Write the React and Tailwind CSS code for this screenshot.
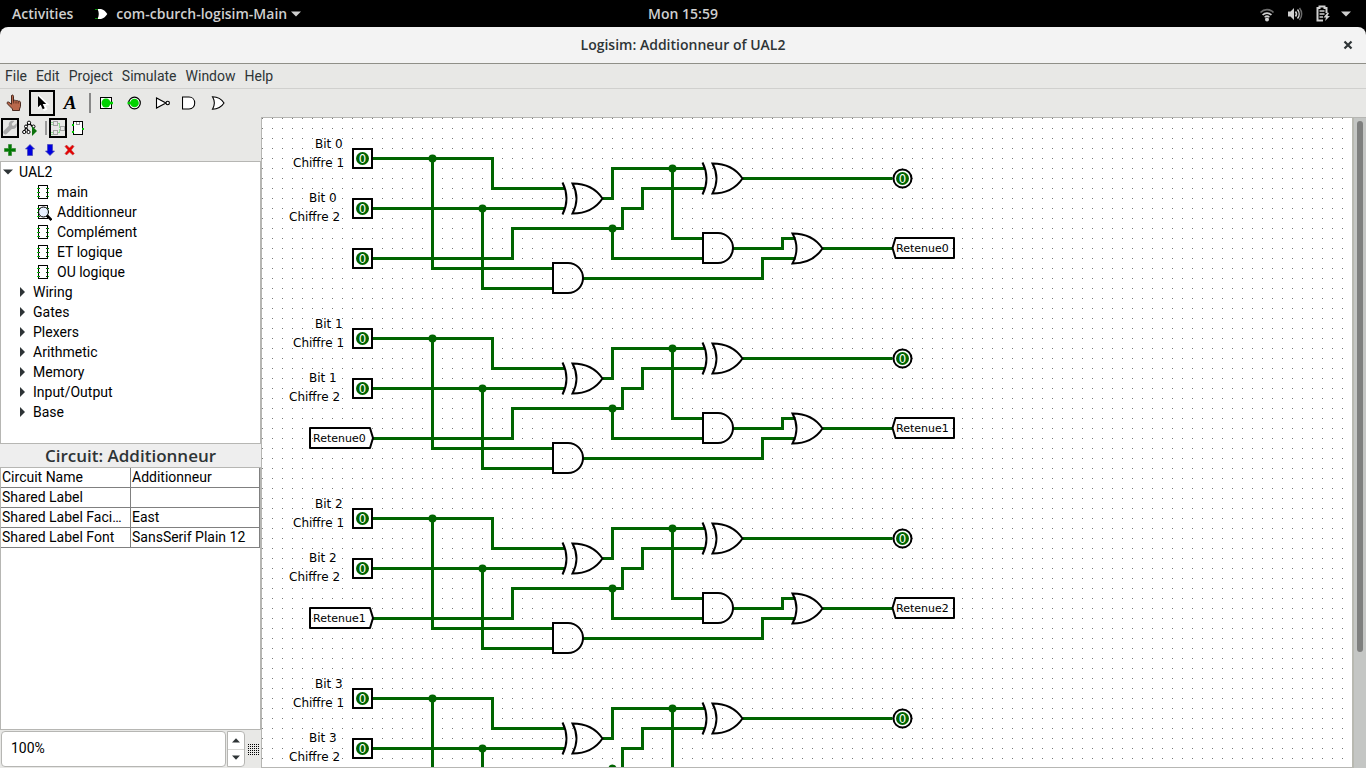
const ROW_COUNT = 4;
const ROW_HEIGHT = 180;

const MENUS = ['File', 'Edit', 'Project', 'Simulate', 'Window', 'Help'];
const CIRCUITS = ['main', 'Additionneur', 'Complément', 'ET logique', 'OU logique'];
const LIBRARIES = ['Wiring', 'Gates', 'Plexers', 'Arithmetic', 'Memory', 'Input/Output', 'Base'];
const ATTRIBUTES = [
  ['Circuit Name', 'Additionneur'],
  ['Shared Label', ''],
  ['Shared Label Facing', 'East'],
  ['Shared Label Font', 'SansSerif Plain 12'],
];

/* ---------- icons ---------- */

function WifiIcon() {
  return (
    <svg width="16" height="16" viewBox="0 0 16 16" fill="none" strokeLinecap="butt">
      <path d="M1.5 6.5a9 9 0 0 1 13 0" stroke="#6b6b6b" strokeWidth="1.7" />
      <path d="M3.6 9a6.2 6.2 0 0 1 8.8 0" stroke="#d0d0d0" strokeWidth="1.7" />
      <path d="M5.6 11.2a3.6 3.6 0 0 1 4.8 0" stroke="#d0d0d0" strokeWidth="1.5" />
      <circle cx="8" cy="13.6" r="2" fill="#d0d0d0" />
    </svg>
  );
}

function VolumeIcon() {
  return (
    <svg width="16" height="16" viewBox="0 0 16 16" fill="none">
      <path d="M1 5.5h2.5L7 2v12L3.500 10.500H1z" fill="#d0d0d0" />
      <path d="M8.500 5.500a4 4 0 0 1 0 5" stroke="#d0d0d0" strokeWidth="1.6" />
      <path d="M10.500 3.500a7 7 0 0 1 0 9" stroke="#d0d0d0" strokeWidth="1.500" />
      <path d="M12.500 2a9.500 9.500 0 0 1 0 12" stroke="#6b6b6b" strokeWidth="1.500" />
    </svg>
  );
}

function BatteryIcon() {
  return (
    <svg width="16" height="17" viewBox="0 0 16 17" fill="none">
      <path d="M11.500 8V3h-2V1.500h-5V3h-2v12.500H8" stroke="#d0d0d0" strokeWidth="2" />
      <path d="M4.500 6h5M4.500 9h5M4.500 12h3.500" stroke="#d0d0d0" strokeWidth="1.600" />
      <path d="M12.500 7.500 8.500 12.500h2.500l-1 3.500 5-5h-2.500l1.500-3z" fill="#d0d0d0" />
    </svg>
  );
}

function TriangleDown({ className }) {
  return (
    <svg className={className} width="10" height="6" viewBox="0 0 10 6" fill="currentColor">
      <path d="M0 .5h10L5 5.500z" />
    </svg>
  );
}

function AppIcon() {
  return (
    <svg width="13" height="12" viewBox="0 0 13 12">
      <path d="M2.500 1H6c3 .5 4.500 2.500 6.300 5C10.500 8.500 9 10.500 6 11H2.500C4.200 8 4.200 4 2.500 1z" fill="#fff" />
      <path d="M0 1.500h3M0 10.500h3" stroke="#0a8a0a" />
    </svg>
  );
}

function PokeIcon() {
  return (
    <svg width="16" height="18" viewBox="0 0 16 18">
      <path
        d="M5.500 1.500c.7-.9 2-.5 2 .8V7l.8-.7c.6-.3 1.400 0 1.600.6l.7-.3c.7-.2 1.300.1 1.500.7.9-.5 2.200-.1 2.400 1v4.200l-1 2.500v1.500H6.500V15L2.500 11 1 9.200c-.2-1 1-1.600 1.900-1l2.600 2z"
        fill="#b9684c"
        stroke="#3a1c12"
        strokeWidth=".9"
      />
      <path d="M7.700 7v2.500M10 7.500v2M12.200 7.800v1.800" stroke="#3a1c12" strokeWidth=".7" />
    </svg>
  );
}

function ArrowIcon() {
  return (
    <svg width="16" height="18" viewBox="0 0 16 18">
      <path d="M5 2v12l3-2.500 2.200 4.500 2.300-1-2.200-4.500h3.700z" fill="#fff" stroke="#fff" strokeWidth="1.500" />
      <path d="M4 2v11.200l2.700-2.500 2 4.500 2-.9-2-4.300h3.500z" fill="#000" />
    </svg>
  );
}

function TextToolIcon() {
  return (
    <span className="font-['Liberation_Serif',serif] text-[19px] leading-[20px] font-bold italic text-black">A</span>
  );
}

function PinSquareIcon() {
  return (
    <svg width="16" height="16" viewBox="0 0 16 16">
      <rect x="2.500" y="2.500" width="11" height="11" fill="#fff" stroke="#000" shapeRendering="crispEdges" />
      <circle cx="8" cy="8" r="4.500" fill="#00d200" />
      <path d="M11 8h4" stroke="#00d200" strokeWidth="2.500" />
    </svg>
  );
}

function PinRoundIcon() {
  return (
    <svg width="16" height="16" viewBox="0 0 16 16">
      <circle cx="8.500" cy="8" r="5.800" fill="#fff" stroke="#000" strokeWidth="1.200" />
      <circle cx="8.500" cy="8" r="4.300" fill="#00d200" />
      <path d="M1.500 8H5" stroke="#00d200" strokeWidth="2.500" />
    </svg>
  );
}

function NotIcon() {
  return (
    <svg width="16" height="16" viewBox="0 0 16 16" fill="#fff" stroke="#000" strokeWidth="1.100">
      <path d="M2.500 3v10L12 8z" />
      <circle cx="13.700" cy="8" r="1.700" />
    </svg>
  );
}

function AndIcon() {
  return (
    <svg width="16" height="16" viewBox="0 0 16 16" fill="#fff" stroke="#000" strokeWidth="1.100">
      <path d="M.5 2h6.500c3.500 0 5.700 2.700 5.700 6S10.500 14 7 14H.5z" />
    </svg>
  );
}

function OrIcon() {
  return (
    <svg width="16" height="16" viewBox="0 0 16 16" fill="#fff" stroke="#000" strokeWidth="1.100">
      <path d="M2.500 1.800C8 2 11.500 4 14 8 11.500 12 8 14 2.500 14.200 5 10 5 6 2.500 1.800z" />
    </svg>
  );
}

function WrenchIcon() {
  return (
    <svg width="16" height="18" viewBox="0 0 16 18">
      <path
        d="M15.500 3.500 12.500 6.500 10.500 6 10 4l3-3c-2-.8-4.300-.3-5.500 1.200-1 1.300-1.200 2.800-.8 4.300L1 12.200c-1 1-1 2.600 0 3.500s2.500.9 3.500 0l5.600-5.700c1.600.4 3.200 0 4.300-1.100 1.400-1.400 1.800-3.500 1.100-5.400z"
        fill="#a9a9a9"
      />
    </svg>
  );
}

function SimulationTreeIcon() {
  return (
    <svg width="16" height="16" viewBox="0 0 16 16">
      <g fill="#fff" stroke="#000">
        <path d="M7 3 4 7 2.500 11M7 3l5 5M4 7l2.500 4" fill="none" strokeWidth="1.300" />
        <circle cx="7" cy="2.800" r="1.700" />
        <circle cx="4" cy="6.500" r="1.500" />
        <circle cx="11.500" cy="6.500" r="1.500" />
        <circle cx="2.200" cy="12" r="1.600" />
        <circle cx="6.500" cy="12" r="1.600" />
      </g>
      <path d="M10 6v10l5-5z" fill="#0b720b" />
    </svg>
  );
}

function LayoutIcon() {
  return (
    <svg width="16" height="16" viewBox="0 0 16 16" className="shrink-0" fill="none" shapeRendering="crispEdges">
      <path d="M7 3.500h2.500v4h1M7 12.500h2.500v-3h1M1 2.500h2M1 12.500h2M1 4.500h2M1 14.500h2" stroke="#8fdc8f" />
      <path d="M3.500 1.500h4v4h-4zM3.500 10.500h4v4h-4zM10.500 6.500h4v4h-4z" stroke="#a5a5a5" />
    </svg>
  );
}

function AppearanceIcon() {
  return (
    <svg width="16" height="16" viewBox="0 0 16 16" shapeRendering="crispEdges">
      <rect x="3.500" y="1.500" width="9" height="13" fill="#fff" stroke="#000" />
      <path d="M6.500 2v2h3V2" fill="none" stroke="#999" />
      <path d="M2 5h2M2 12h2M12 9h2" stroke="#00c400" strokeWidth="2" />
    </svg>
  );
}

function PlusIcon() {
  return (
    <svg width="12" height="12" viewBox="0 0 12 12">
      <path d="M4.500.5h3v4h4v3h-4v4h-3v-4h-4v-3h4z" fill="#007a00" stroke="#3b8a3b" strokeWidth=".8" />
    </svg>
  );
}

function UpIcon() {
  return (
    <svg width="12" height="12" viewBox="0 0 12 12">
      <path d="M6 .5 10.500 5H8.500v6.500h-5V5h-2z" fill="#0000e0" stroke="#4444b0" strokeWidth=".7" />
    </svg>
  );
}

function DownIcon() {
  return (
    <svg width="12" height="12" viewBox="0 0 12 12">
      <path d="M6 11.500 10.500 7H8.500V.5h-5V7h-2z" fill="#0000e0" stroke="#4444b0" strokeWidth=".7" />
    </svg>
  );
}

function DeleteIcon() {
  return (
    <svg width="12" height="12" viewBox="0 0 12 12">
      <path
        d="M1 2.500 2.500 1 5.500 4 8.500 1 10 2.500 7.300 6l3 3.500L8.800 11 5.500 8 2.500 11 1 9.500 4 6z"
        fill="#e60000"
        stroke="#c04040"
        strokeWidth=".6"
      />
    </svg>
  );
}

function ChipIcon({ open }) {
  return (
    <svg width="16" height="18" viewBox="0 0 16 18" className="shrink-0">
      <g shapeRendering="crispEdges">
        <rect x="2.500" y="2.500" width="9" height="13" fill="#fff" stroke="#000" />
        <path d="M1 5.500h3M1 9.500h3M1 13.500h3M10 5.500h3M10 9.500h3M10 13.500h3" stroke="#063c06" />
        <path d="M1 5.500h2M1 9.500h2M1 13.500h2M11 5.500h1M12 9.500h1M12 13.500h1" stroke="#00d200" />
      </g>
      {open && (
        <g>
          <path d="m11 12.500 4.500 4.500" stroke="#000" strokeWidth="2.600" />
          <circle cx="7.500" cy="9" r="5" fill="#e6eeff" fillOpacity=".9" stroke="#000" />
        </g>
      )}
    </svg>
  );
}

/* ---------- circuit parts ---------- */

function AndGate({ x, y }) {
  return (
    <path
      d={`M${x - 30} ${y - 15.5}h15a15 15 0 0 1 0 30h-15z`}
      fill="none"
      stroke="#000"
      strokeWidth="2"
    />
  );
}

function OrGate({ x, y, exclusive }) {
  return (
    <g fill="none" stroke="#000" strokeWidth="2">
      <path
        d={`M${x} ${y}Q${x - 10} ${y - 15} ${x - 30} ${y - 15}Q${x - 22} ${y} ${x - 30} ${y + 15}Q${x - 10} ${y + 15} ${x} ${y}z`}
      />
      {exclusive && <path d={`M${x - 40} ${y - 16}Q${x - 32} ${y} ${x - 40} ${y + 16}`} />}
    </g>
  );
}

function PinValue({ x, y }) {
  return (
    <g>
      <circle cx={x} cy={y} r="6.5" fill="#006400" />
      <text
        x={x}
        y={y + 4.5}
        textAnchor="middle"
        className="font-['DejaVu_Sans_Condensed','DejaVu_Sans',sans-serif] text-[13px]"
        fill="#fff"
      >
        0
      </text>
    </g>
  );
}

function InputPin({ x, y }) {
  return (
    <g>
      <rect x={x - 9.5} y={y - 9.5} width="19" height="19" fill="none" stroke="#000" strokeWidth="2" />
      <PinValue x={x} y={y} />
    </g>
  );
}

function OutputPin({ x, y }) {
  return (
    <g>
      <circle cx={x} cy={y} r="9" fill="#fff" stroke="#000" strokeWidth="2" />
      <PinValue x={x} y={y} />
    </g>
  );
}

function Tunnel({ x, y, label, side }) {
  const top = y - 10.5;
  const d =
    side === 'left'
      ? `M${x + 0.5} ${y - 0.5}L${x - 2.5} ${top}h-60v20h60z`
      : `M${x} ${y - 0.5}L${x + 3} ${top}h58.500v20h-58.500z`;
  return (
    <g>
      <path d={d} fill="none" stroke="#000" strokeWidth="2" strokeLinejoin="round" />
      <text x={side === 'left' ? x - 59.5 : x + 3.5} y={y + 3.5} fontSize="11" fill="#000">
        {label}
      </text>
    </g>
  );
}

const WIRES = [
  'M110 40H230V70H302',
  'M170 40V150H290',
  'M110 90H302',
  'M220 90V170H290',
  'M110 140H250V110H360V90H380V70H442',
  'M350 110V140H440',
  'M340 80H350V50H442',
  'M410 50V120H440',
  'M470 130H520V120H533',
  'M320 160H500V140H533',
  'M560 130H630',
  'M480 60H630',
].join('');

const JUNCTIONS = [
  [170, 40],
  [220, 90],
  [350, 110],
  [410, 50],
];

function FullAdder({ index }) {
  const hasCarry = index < ROW_COUNT - 1;
  return (
    <g transform={`translate(0 ${index * ROW_HEIGHT})`}>
      <g fontSize="12" fill="#000">
        <text x="52.5" y="29.500">{`Bit ${index}`}</text>
        <text x="30.5" y="48.500">Chiffre 1</text>
        <text x="46.5" y="83.500">{`Bit ${index}`}</text>
        <text x="26.5" y="102.500">Chiffre 2</text>
      </g>
      <path d={WIRES} fill="none" stroke="#006400" strokeWidth="3" />
      {JUNCTIONS.map(([x, y]) => (
        <circle key={`${x}-${y}`} cx={x} cy={y} r="4" fill="#006400" />
      ))}
      <InputPin x={100} y={40} />
      <InputPin x={100} y={90} />
      {index === 0 && <InputPin x={100} y={140} />}
      {index > 0 && hasCarry && <Tunnel x={110} y={140} side="left" label={`Retenue${index - 1}`} />}
      <OrGate x={340} y={80} exclusive />
      <OrGate x={480} y={60} exclusive />
      <AndGate x={470.5} y={130} />
      <AndGate x={320.5} y={160} />
      <OrGate x={560} y={130} />
      <OutputPin x={640} y={60} />
      {hasCarry && <Tunnel x={630} y={130} side="right" label={`Retenue${index}`} />}
    </g>
  );
}

function CircuitCanvas() {
  return (
    <svg className="block h-full w-full" role="img" aria-label="Additionneur">
      <defs>
        <pattern id="grid" width="10" height="10" patternUnits="userSpaceOnUse">
          <rect width="1" height="1" fill="#777" />
        </pattern>
      </defs>
      <rect width="100%" height="100%" fill="url(#grid)" />
      <g transform="translate(.5 .5)" className="font-['DejaVu_Sans',sans-serif]">
        {Array.from({ length: ROW_COUNT }, (_, i) => (
          <FullAdder key={i} index={i} />
        ))}
      </g>
    </svg>
  );
}

/* ---------- window parts ---------- */

function ToolButton({ label, selected, children }) {
  return (
    <button
      type="button"
      aria-label={label}
      aria-pressed={!!selected}
      className={
        selected
          ? 'mx-px flex h-[26px] w-[26px] items-center justify-center border-2 border-black'
          : 'flex h-[26px] w-7 items-center justify-center'
      }
    >
      {children}
    </button>
  );
}

function SmallButton({ label, selected, children }) {
  return (
    <button
      type="button"
      aria-label={label}
      className={
        selected
          ? 'mx-px flex h-5 w-[18px] items-center justify-center border-2 border-black'
          : 'flex h-5 w-5 items-center justify-center'
      }
    >
      {children}
    </button>
  );
}

function TopBar() {
  return (
    <header className="grid h-[27px] shrink-0 grid-cols-[1fr_auto_1fr] items-center bg-black px-3 font-['Open_Sans',sans-serif] text-sm leading-[26px] font-semibold text-[#cfcfcf]">
      <div className="flex items-center">
        <button type="button">Activities</button>
        <button type="button" className="ml-[22px] flex items-center">
          <AppIcon />
          <span className="ml-2">com-cburch-logisim-Main</span>
          <TriangleDown className="ml-1" />
        </button>
      </div>
      <time>Mon 15:59</time>
      <div className="flex items-center justify-end">
        <WifiIcon />
        <span className="ml-3"><VolumeIcon /></span>
        <span className="ml-3"><BatteryIcon /></span>
        <TriangleDown className="mr-[3px] ml-[10px]" />
      </div>
    </header>
  );
}

function TitleBar() {
  return (
    <div className="bg-black">
      <div className="grid h-[37px] grid-cols-[1fr_auto_1fr] items-center rounded-t-lg border-b border-[#8f8f88] bg-[#f3f3f3] px-3 text-[#2e3436]">
        <span />
        <h1 className="font-['Open_Sans',sans-serif] text-sm font-semibold">Logisim: Additionneur of UAL2</h1>
        <button type="button" aria-label="Close" className="justify-self-end p-px">
          <svg width="10" height="10" viewBox="0 0 10 10">
            <path d="m1.500 1.500 7 7m0-7-7 7" stroke="currentColor" strokeWidth="2.200" />
          </svg>
        </button>
      </div>
    </div>
  );
}

function Explorer() {
  return (
    <nav
      aria-label="Project"
      className="min-h-0 flex-[282] overflow-hidden border border-[#b6b6b3] bg-white text-sm leading-5 text-black"
    >
      <div className="flex items-center pl-[2px]">
        <TriangleDown className="text-[#2e3436]" />
        <span className="ml-1.5">UAL2</span>
      </div>
      <ul>
        {CIRCUITS.map((name) => (
          <li key={name} className="flex h-5 items-center pl-[35px]">
            <ChipIcon open={name === 'Additionneur'} />
            <span className="ml-[5px]">{name}</span>
          </li>
        ))}
        {LIBRARIES.map((name) => (
          <li key={name} className="flex h-5 items-center pl-[19px]">
            <svg width="5" height="10" viewBox="0 0 5 10" fill="#2e3436">
              <path d="M0 0v10l5-5z" />
            </svg>
            <span className="ml-2">{name}</span>
          </li>
        ))}
      </ul>
    </nav>
  );
}

function Attributes() {
  return (
    <section className="flex min-h-0 flex-[287] flex-col">
      <h2 className="flex h-6 items-center justify-center border-b border-[#b6b6b3] bg-[#eeeeee] font-['Open_Sans',sans-serif] text-[17px] leading-6 font-semibold text-[#2e3436]">
        Circuit: Additionneur
      </h2>
      <div className="flex-1 border-x border-b border-[#b6b6b3] bg-white">
        <table className="w-full table-fixed border-separate border-spacing-0 border-r border-[#808080] text-sm leading-[19px] text-black">
          <colgroup>
            <col className="w-[130px]" />
            <col />
          </colgroup>
          <tbody>
            {ATTRIBUTES.map(([name, value]) => (
              <tr key={name} className="h-5">
                <th scope="row" className="truncate border-r border-b border-[#808080] pr-1 pl-px text-left font-normal">
                  {name}
                </th>
                <td className="truncate border-b border-[#808080] px-px">{value}</td>
              </tr>
            ))}
          </tbody>
        </table>
      </div>
    </section>
  );
}

function ZoomControl() {
  return (
    <div className="flex h-[38px] shrink-0 items-center gap-px pl-px">
      <input
        type="text"
        aria-label="Zoom"
        defaultValue="100%"
        className="h-9 min-w-0 flex-1 rounded border border-[#b6b6b3] bg-white px-[9px] pb-0.5 text-sm text-black"
      />
      <div className="flex h-9 w-[18px] flex-col divide-y divide-[#d5d5d2] rounded-r border border-[#b6b6b3] bg-white text-[#2e3436]">
        <button type="button" aria-label="Zoom in" className="flex flex-1 items-center justify-center">
          <svg width="8" height="5" viewBox="0 0 8 5" fill="currentColor">
            <path d="M0 4.500h8L4 .2z" />
          </svg>
        </button>
        <button type="button" aria-label="Zoom out" className="flex flex-1 items-center justify-center">
          <svg width="8" height="5" viewBox="0 0 8 5" fill="currentColor">
            <path d="M0 .5h8L4 4.800z" />
          </svg>
        </button>
      </div>
      <button type="button" aria-label="Toggle grid" className="flex w-[15px] items-center justify-center">
        <svg width="11" height="11" viewBox="0 0 11 11" shapeRendering="crispEdges">
          <defs>
            <pattern id="grip" width="2" height="2" patternUnits="userSpaceOnUse">
              <rect width="1" height="1" fill="#000" />
            </pattern>
          </defs>
          <rect width="11" height="11" fill="url(#grip)" />
        </svg>
      </button>
    </div>
  );
}

export default function App() {
  return (
    <div className="flex h-screen flex-col overflow-hidden bg-[#e8e8e6] font-['Roboto',sans-serif]">
      <TopBar />
      <TitleBar />
      <div className="flex h-[25px] shrink-0 items-center gap-[9px] border-b border-[#d0d0ce] px-[5px] text-sm text-[#2e3436]">
        {MENUS.map((name) => (
          <button key={name} type="button">
            {name}
          </button>
        ))}
      </div>
      <div className="flex h-7 shrink-0 items-center">
        <ToolButton label="Poke tool"><PokeIcon /></ToolButton>
        <ToolButton label="Edit tool" selected><ArrowIcon /></ToolButton>
        <ToolButton label="Text tool"><TextToolIcon /></ToolButton>
        <span className="mr-px ml-[5px] h-5 w-[2px] bg-[#888]" />
        <ToolButton label="Input pin"><PinSquareIcon /></ToolButton>
        <ToolButton label="Output pin"><PinRoundIcon /></ToolButton>
        <ToolButton label="NOT gate"><NotIcon /></ToolButton>
        <ToolButton label="AND gate"><AndIcon /></ToolButton>
        <ToolButton label="OR gate"><OrIcon /></ToolButton>
      </div>
      <div className="flex min-h-0 flex-1">
        <aside className="flex w-[261px] shrink-0 flex-col">
          <div className="flex h-[22px] shrink-0 items-center">
            <SmallButton label="Show project" selected><WrenchIcon /></SmallButton>
            <SmallButton label="Show simulation"><SimulationTreeIcon /></SmallButton>
            <span className="mr-px ml-[5px] h-[14px] w-[2px] bg-[#999]" />
            <SmallButton label="Edit layout" selected><LayoutIcon /></SmallButton>
            <SmallButton label="Edit appearance"><AppearanceIcon /></SmallButton>
          </div>
          <div className="flex h-[22px] shrink-0 items-center">
            <SmallButton label="Add circuit"><PlusIcon /></SmallButton>
            <SmallButton label="Move up"><UpIcon /></SmallButton>
            <SmallButton label="Move down"><DownIcon /></SmallButton>
            <SmallButton label="Remove circuit"><DeleteIcon /></SmallButton>
          </div>
          <Explorer />
          <Attributes />
          <ZoomControl />
        </aside>
        <main className="min-w-0 flex-1 overflow-hidden border-y border-l border-[#b6b6b3] bg-white">
          <CircuitCanvas />
        </main>
        <div className="w-[14px] shrink-0 border-t border-l-2 border-t-[#b6b6b3] border-l-[#b8b9b1] bg-[#c4c6c4] px-[3px] pt-[3px]">
          <div className="h-[82%] rounded-full bg-[#7e7f7e]" />
        </div>
      </div>
    </div>
  );
}
